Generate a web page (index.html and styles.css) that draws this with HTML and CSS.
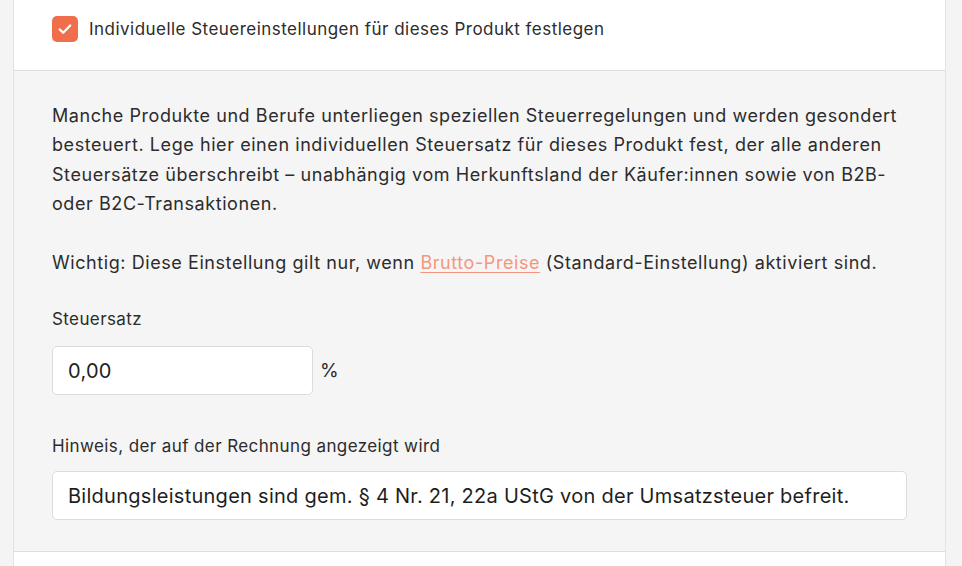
FILE: index.html
```html
<!DOCTYPE html>
<html lang="de">
<head>
<meta charset="utf-8">
<title>Steuereinstellungen</title>
<link rel="stylesheet" href="styles.css">
</head>
<body>
<div class="card">
  <div class="card-head">
    <label class="check">
      <span class="box">
        <svg width="18" height="18" viewBox="0 0 18 18"><path d="M3.6 9.4 L7.2 12.8 L14.2 5.4" fill="none" stroke="#fff" stroke-width="2.2" stroke-linecap="round" stroke-linejoin="round"/></svg>
      </span>
      <span class="check-label">Individuelle Steuereinstellungen für dieses Produkt festlegen</span>
    </label>
  </div>
  <div class="card-body">
    <p class="text">Manche Produkte und Berufe unterliegen speziellen Steuerregelungen und werden gesondert besteuert. Lege hier einen individuellen Steuersatz für dieses Produkt fest, der alle anderen Steuersätze überschreibt – unabhängig vom Herkunftsland der Käufer:innen sowie von B2B- oder B2C-Transaktionen.</p>
    <p class="text">Wichtig: Diese Einstellung gilt nur, wenn <a class="link" href="#">Brutto-Preise</a> (Standard-Einstellung) aktiviert sind.</p>
    <div class="field">
      <div class="label">Steuersatz</div>
      <div class="row">
        <div class="input small">0,00</div>
        <span class="unit">%</span>
      </div>
    </div>
    <div class="field second">
      <div class="label">Hinweis, der auf der Rechnung angezeigt wird</div>
      <div class="input wide">Bildungsleistungen sind gem. § 4 Nr. 21, 22a UStG von der Umsatzsteuer befreit.</div>
    </div>
  </div>
  <div class="card-foot"></div>
</div>
</body>
</html>
```
FILE: styles.css
```css
html, body {
  margin: 0;
  padding: 0;
  background: #f4f4f4;
  font-family: Inter, "Noto Sans", sans-serif;
  color: #2c2c2c;
  overflow: hidden;
}
.card {
  margin-left: 13px;
  width: 931px;
  border-left: 1px solid #e2e2e2;
  border-right: 1px solid #e2e2e2;
  background: #fff;
}
.card-head {
  box-sizing: border-box;
  height: 71px;
  padding: 0 0 13px 38px;
  border-bottom: 1px solid #dedede;
  display: flex;
  align-items: center;
}
.check {
  display: flex;
  align-items: center;
  gap: 11px;
}
.box {
  width: 26px;
  height: 26px;
  border-radius: 5px;
  background: #ef6e4c;
  display: flex;
  align-items: center;
  justify-content: center;
}
.check-label {
  font-size: 17px;
  letter-spacing: 0.47px;
}
.card-body {
  display: flex;
  flex-direction: column;
  align-items: flex-start;
  background: #f5f5f5;
  padding: 30px 38px 31px;
  border-bottom: 1px solid #dedede;
}
.text {
  margin: 0 0 29px;
  font-size: 18px;
  line-height: 29.4px;
  letter-spacing: 0.57px;
}
.link {
  color: #f4977c;
  text-decoration: underline;
  text-underline-offset: 3px;
  text-decoration-thickness: 1px;
}
.field {
  margin-top: 1px;
}
.field.second {
  margin-top: 39px;
}
.label {
  font-size: 17px;
  line-height: 24px;
  letter-spacing: 0.4px;
  margin-bottom: 15px;
}
.field.second .label {
  margin-bottom: 13px;
}
.row {
  display: flex;
  align-items: center;
  gap: 7px;
}
.input {
  box-sizing: border-box;
  height: 49px;
  background: #fff;
  border: 1px solid #dcdcdc;
  border-radius: 5px;
  padding: 0 15px;
  display: flex;
  align-items: center;
  font-size: 20px;
  letter-spacing: 0.27px;
  color: #1e1e1e;
}
.input.small {
  width: 261px;
}
.input.wide {
  width: 855px;
}
.unit {
  font-size: 19px;
  letter-spacing: 0.3px;
}
.card-foot {
  height: 40px;
  background: #fff;
}
```
